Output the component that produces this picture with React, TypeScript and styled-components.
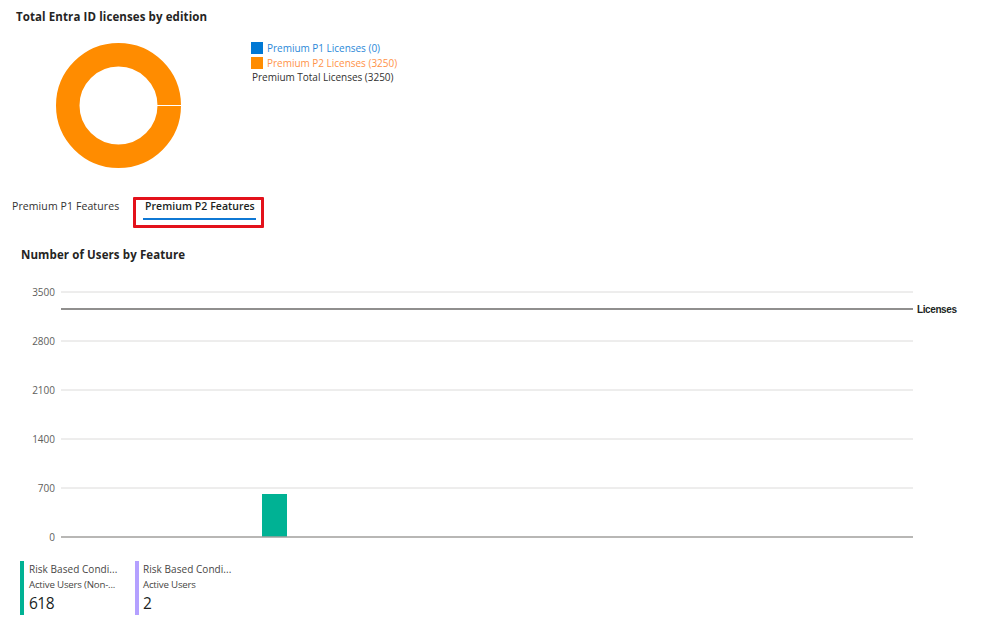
import React from "react";
import styled, { createGlobalStyle } from "styled-components";

const Global = createGlobalStyle`
  html, body { margin: 0; padding: 0; background: #fff; }
  body { font-family: "Open Sans", "Noto Sans", sans-serif; color: #201f1e; }
`;

const Page = styled.div`
  width: 999px;
  height: 627px;
  overflow: hidden;
  display: flex;
  flex-direction: column;
  background: #fff;
`;

const Title = styled.h2`
  margin: 9px 0 0 16px;
  height: 16px;
  font-size: 11.5px;
  line-height: 16px;
  font-weight: 700;
  color: #252423;
  letter-spacing: 0.1px;
`;

const Summary = styled.section`
  display: flex;
  align-items: flex-start;
  margin: 18px 0 0 56px;
  height: 125px;
`;

const Donut = styled.svg`
  width: 125px;
  height: 125px;
  flex: none;
`;

const Legend = styled.ul`
  list-style: none;
  margin: -2px 0 0 70px;
  padding: 0;
  display: flex;
  flex-direction: column;
`;

const LegendItem = styled.li<{ $color: string }>`
  display: flex;
  align-items: center;
  gap: 4px;
  height: 14.5px;
  font-size: 10px;
  line-height: 14px;
  letter-spacing: -0.02px;
  white-space: nowrap;
  color: ${(p) => p.$color};
`;

const Swatch = styled.span<{ $color: string }>`
  width: 12px;
  height: 12px;
  flex: none;
  background: ${(p) => p.$color};
`;

const TotalText = styled.span`
  margin-left: 1px;
  color: #323130;
`;

const Tabs = styled.nav`
  display: flex;
  align-items: flex-start;
  margin: 29px 0 0 12px;
  height: 31px;
`;

const Tab = styled.div`
  margin-top: 2px;
  width: 121px;
  font-size: 10.5px;
  line-height: 14px;
  letter-spacing: 0.1px;
  white-space: nowrap;
  color: #323130;
`;

const Highlight = styled.div`
  box-sizing: border-box;
  width: 131px;
  height: 31px;
  padding: 0 5px 0 7px;
  border: 3px solid #e3111b;
  border-radius: 1px;
`;

const ActiveTab = styled.div`
  height: 19px;
  margin-top: -1px;
  padding-left: 2px;
  font-size: 10.5px;
  line-height: 14px;
  font-weight: 600;
  letter-spacing: 0.05px;
  white-space: nowrap;
  color: #201f1e;
  border-bottom: 2px solid #0f78d4;
`;

const ChartTitle = styled.h3`
  margin: 19px 0 0 21px;
  height: 16px;
  font-size: 11.5px;
  line-height: 16px;
  font-weight: 700;
  color: #252423;
  letter-spacing: 0.1px;
`;

const Chart = styled.svg`
  display: block;
  width: 999px;
  height: 270px;
  margin-top: 17px;
  flex: none;
`;

const AxisLabel = styled.text`
  font-family: "Open Sans", sans-serif;
  font-size: 10px;
  fill: #605e5c;
  text-anchor: end;
`;

const LineLabel = styled.text`
  font-family: "Liberation Sans", sans-serif;
  font-size: 10px;
  font-weight: 700;
  letter-spacing: -0.4px;
  fill: #201f1e;
`;

const Cards = styled.div`
  display: flex;
  margin: 11px 0 0 20px;
`;

const Card = styled.div<{ $color: string }>`
  box-sizing: border-box;
  width: 115px;
  height: 54px;
  display: flex;
  flex-direction: column;
  padding-left: 5px;
  border-left: 4px solid ${(p) => p.$color};
`;

const SecondCard = styled(Card)`
  padding-left: 4px;
`;

const CardLine = styled.div`
  font-size: 10px;
  line-height: 16px;
  color: #484644;
  white-space: nowrap;
  letter-spacing: 0.05px;
`;

const CardSubLine = styled(CardLine)`
  font-size: 9.7px;
  letter-spacing: -0.2px;
`;

const CardValue = styled.div`
  font-size: 15.5px;
  line-height: 20px;
  letter-spacing: -0.5px;
  color: #201f1e;
`;

const ticks = [
  { label: "3500", y: 12 },
  { label: "2800", y: 61 },
  { label: "2100", y: 110 },
  { label: "1400", y: 159 },
  { label: "700", y: 208 },
];

export default function App() {
  return (
    <Page>
      <Global />
      <Title>Total Entra ID licenses by edition</Title>
      <Summary>
        <Donut viewBox="0 0 125 125">
          <circle cx="62.5" cy="62.5" r="50.75" fill="none" stroke="#ff8c00" strokeWidth="23.5" />
          <rect x="100" y="62" width="25" height="1" fill="#fff" />
        </Donut>
        <Legend>
          <LegendItem $color="#2b88d8">
            <Swatch $color="#0078d4" />
            Premium P1 Licenses (0)
          </LegendItem>
          <LegendItem $color="#ff9349">
            <Swatch $color="#ff8c00" />
            Premium P2 Licenses (3250)
          </LegendItem>
          <LegendItem $color="#323130">
            <TotalText>Premium Total Licenses (3250)</TotalText>
          </LegendItem>
        </Legend>
      </Summary>
      <Tabs>
        <Tab>Premium P1 Features</Tab>
        <Highlight>
          <ActiveTab>Premium P2 Features</ActiveTab>
        </Highlight>
      </Tabs>
      <ChartTitle>Number of Users by Feature</ChartTitle>
      <Chart viewBox="0 0 999 270">
        {ticks.map((t) => (
          <g key={t.label}>
            <line x1="61" x2="913" y1={t.y} y2={t.y} stroke="#dcdbda" strokeWidth="1" />
            <AxisLabel x="55" y={t.y + 3.5}>{t.label}</AxisLabel>
          </g>
        ))}
        <line x1="61" x2="913" y1="29" y2="29" stroke="#6b6a69" strokeWidth="1.3" />
        <LineLabel x="917" y="33">Licenses</LineLabel>
        <rect x="262" y="214" width="25" height="43" fill="#00b294" />
        <line x1="61" x2="913" y1="257" y2="257" stroke="#a19f9d" strokeWidth="1.3" />
        <AxisLabel x="55" y="260.5">0</AxisLabel>
      </Chart>
      <Cards>
        <Card $color="#00b294">
          <CardLine>Risk Based Condi...</CardLine>
          <CardSubLine>Active Users (Non-...</CardSubLine>
          <CardValue>618</CardValue>
        </Card>
        <SecondCard $color="#b4a0ff">
          <CardLine>Risk Based Condi...</CardLine>
          <CardSubLine>Active Users</CardSubLine>
          <CardValue>2</CardValue>
        </SecondCard>
      </Cards>
    </Page>
  );
}
